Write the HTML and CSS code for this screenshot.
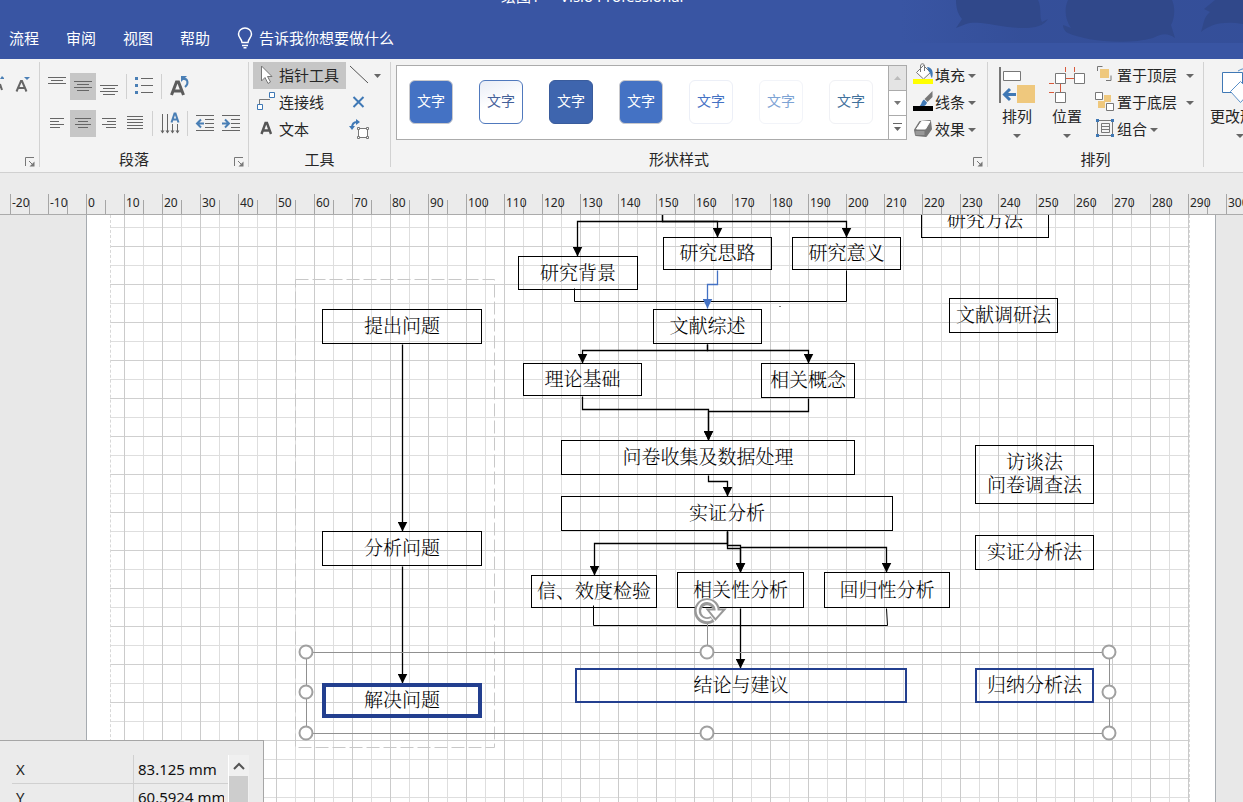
FILE: index.html
```html
<!DOCTYPE html>
<html lang="zh-CN">
<head>
<meta charset="utf-8">
<title>绘图1 - Visio Professional</title>
<link rel="stylesheet" href="styles.css">
</head>
<body>
<header class="header">
  <svg class="header-art" viewBox="0 0 343 43" aria-hidden="true">
    <defs>
      <linearGradient id="fade" x1="0" x2="1" y1="0" y2="0">
        <stop offset="0" stop-color="#334d96" stop-opacity="0"/>
        <stop offset="0.35" stop-color="#334d96" stop-opacity=".75"/>
        <stop offset="1" stop-color="#334d96" stop-opacity=".75"/>
      </linearGradient>
    </defs>
    <rect width="343" height="43" fill="url(#fade)"/>
    <g fill="#30488a">
      <path d="M56 0h82c4 8 1 17 4 22l6-3c-6 10-22 10-40 8-20-3-34-6-42-3l-10 4 6-9c-5-6-6-13-6-19z"/>
      <path d="M168 0h104c4 9 2 20-1 25l4 13c-8-6-14-4-22 0-30 8-70 2-85-5-4-2-5-6-5-8l8 3c-6-9-7-19-3-28z"/>
      <path d="M315 0h28v24c-20-3-32 0-42 8 3-8 2-14 9-20l-6-3z"/>
    </g>
  </svg>
  <div class="titlebar"><span>绘图1&nbsp; -&nbsp; Visio Professional</span></div>
  <nav class="tabs">
    <button class="tab">流程</button>
    <button class="tab">审阅</button>
    <button class="tab">视图</button>
    <button class="tab">帮助</button>
    <button class="tab tell-me">
      <svg width="16" height="22" viewBox="0 0 16 22" fill="none" stroke="#fff" stroke-width="1.5"><path d="M5 15.500C5 12 1.500 11 1.500 7a6.500 6 0 0 1 13 0C14.500 11 11 12 11 15.500zM5 18.500h6M6.500 20.800h3"/></svg>
      告诉我你想要做什么
    </button>
  </nav>
</header>

<section class="ribbon">
  <div class="group group-font">
    <div class="group-body">
      <button class="icon-btn edge" aria-label="增大字号"><svg width="4" height="27" viewBox="0 0 4 27"><path d="M0 6l2-3 3 3z" fill="#4a7fb5"/><path d="M0 11l2 6" stroke="#666" stroke-width="2"/></svg></button>
      <button class="icon-btn" aria-label="减小字号"><svg width="26" height="27" viewBox="0 0 26 27"><path d="M19 4h6l-3 3z" fill="#4a7fb5"/><path d="M11.500 18.500L16 8h1l4.500 10.500M13.200 15h6.600" fill="none" stroke="#666" stroke-width="2"/></svg></button>
    </div>
    <div class="group-foot"><span></span>
      <button class="launcher" aria-label="字体设置"><svg width="10" height="10" viewBox="0 0 10 10"><path d="M.5 9V.5H9M4 4l4 4" fill="none" stroke="#777"/><path d="M9.500 4.500v5h-5z" fill="#777"/></svg></button></div>
  </div>

  <div class="group group-para">
    <div class="group-body">
      <div class="icon-row">
        <button class="icon-btn" aria-label="顶端对齐"><svg width="26" height="27"><path d="M4 4.500h18M7 7.500h12M4 10.500h18" stroke="#666"/></svg></button>
        <button class="icon-btn on" aria-label="中部对齐"><svg width="26" height="27"><path d="M4 8.500h18M7 11.500h12M4 14.500h18M7 17.500h12" stroke="#666"/></svg></button>
        <button class="icon-btn" aria-label="底端对齐"><svg width="26" height="27"><path d="M4 12.500h18M7 15.500h12M4 18.500h18M7 21.500h12" stroke="#666"/></svg></button>
        <i class="bar"></i>
        <button class="icon-btn" aria-label="项目符号"><svg width="26" height="27"><path d="M4 4h3v3H4zM4 11h3v3H4zM4 18h3v3H4z" fill="#4a7fb5"/><path d="M10 5.500h12M10 12.500h12M10 19.500h12" stroke="#666"/></svg></button>
        <i class="bar"></i>
        <button class="icon-btn" aria-label="旋转文字"><svg width="26" height="27"><path d="M5.500 22l5-13h2l5 13M7.500 18h8" fill="none" stroke="#5c5c5c" stroke-width="3"/><path d="M17 6c5-1 6 5 2 8" fill="none" stroke="#4a7fb5" stroke-width="2"/><path d="M15 3h6l-6 6z" fill="#4a7fb5"/></svg></button>
      </div>
      <div class="icon-row">
        <button class="icon-btn" aria-label="左对齐"><svg width="26" height="27"><path d="M6 8.500h14M6 11.500h9M6 14.500h14M6 17.500h10" stroke="#666"/></svg></button>
        <button class="icon-btn on" aria-label="居中"><svg width="26" height="27"><path d="M5 8.500h16M8 11.500h10M5 14.500h16M8 17.500h10" stroke="#666"/></svg></button>
        <button class="icon-btn" aria-label="右对齐"><svg width="26" height="27"><path d="M6 8.500h14M11 11.500h9M6 14.500h14M10 17.500h10" stroke="#666"/></svg></button>
        <button class="icon-btn" aria-label="两端对齐"><svg width="26" height="27"><path d="M5 6.500h16M5 9.500h16M5 12.500h16M5 15.500h16M5 18.500h16" stroke="#666"/></svg></button>
        <i class="bar"></i>
        <button class="icon-btn" aria-label="文字方向"><svg width="26" height="27"><path d="M5.500 4v19M10.500 4v19M15.500 14v9M20.500 14v9" stroke="#666"/><path d="M3.500 20.500h4l-2 3zM8.500 20.500h4l-2 3zM13.500 20.500h4l-2 3zM18.500 20.500h4l-2 3z" fill="#666"/><path d="M14.500 12.500l3-9h1l3 9M15.500 9.500h5" fill="none" stroke="#4a7fb5" stroke-width="2"/></svg></button>
        <i class="bar"></i>
        <button class="icon-btn" aria-label="减少缩进"><svg width="26" height="27"><path d="M4 5.500h18M13 9.500h9M13 13.500h9M13 17.500h9M4 20.500h18" stroke="#666"/><path d="M12 13.500H6M9 9.500l-4 4 4 4" fill="none" stroke="#4a7fb5" stroke-width="2"/></svg></button>
        <button class="icon-btn" aria-label="增加缩进"><svg width="26" height="27"><path d="M4 5.500h18M13 9.500h9M13 13.500h9M13 17.500h9M4 20.500h18" stroke="#666"/><path d="M4 13.500h6M7 9.500l4 4-4 4" fill="none" stroke="#4a7fb5" stroke-width="2"/></svg></button>
      </div>
    </div>
    <div class="group-foot"><span>段落</span>
      <button class="launcher" aria-label="段落设置"><svg width="10" height="10" viewBox="0 0 10 10"><path d="M.5 9V.5H9M4 4l4 4" fill="none" stroke="#777"/><path d="M9.500 4.500v5h-5z" fill="#777"/></svg></button></div>
  </div>

  <div class="group group-tools">
    <div class="group-body tools">
      <button class="tool on"><svg width="22" height="22"><path d="M4.500 2v15l3.500-3.500 3 6 2.500-1.500-3-5.500h4.500z" fill="#fff" stroke="#777"/></svg>指针工具</button>
      <button class="tool-icon" aria-label="线条"><svg width="34" height="27"><path d="M2 4l18 17" stroke="#555"/><path d="M26 12h7l-3.500 4z" fill="#666"/></svg></button>
      <button class="tool"><svg width="22" height="22"><path d="M2.500 13V8.500H13" fill="none" stroke="#777"/><path d="M12.500 1.500h5v5h-5zM.5 13.500h5v5h-5z" fill="#fff" stroke="#3f78b5"/></svg>连接线</button>
      <button class="tool-icon" aria-label="连接点"><svg width="34" height="27"><path d="M5.500 8l10 10M15.500 8l-10 10" stroke="#3f78b5" stroke-width="2"/></svg></button>
      <button class="tool"><svg width="22" height="22"><path d="M4.500 16l4-11H10l4 11M6 12.500h6.500" fill="none" stroke="#555" stroke-width="2.400"/></svg>文本</button>
      <button class="tool-icon" aria-label="文本块"><svg width="34" height="27"><path d="M4 12c0-4 2-6 5-6" fill="none" stroke="#3f78b5" stroke-width="2"/><path d="M1 10h6l-3 4zM8 3l4 3-4 3z" fill="#3f78b5"/><path d="M10.500 12.500h9v9h-9z" fill="#fff" stroke="#777"/><path d="M9.500 11.500h2v2h-2zM18.500 11.500h2v2h-2zM9.500 20.500h2v2h-2zM18.500 20.500h2v2h-2z" fill="#fff" stroke="#777"/></svg></button>
    </div>
    <div class="group-foot"><span>工具</span></div>
  </div>

  <div class="group group-styles">
    <div class="group-body styles">
      <div class="gallery">
        <button class="swatch s1">文字</button>
        <button class="swatch s2">文字</button>
        <button class="swatch s3">文字</button>
        <button class="swatch s1">文字</button>
        <button class="swatch s5">文字</button>
        <button class="swatch s6">文字</button>
        <button class="swatch s7">文字</button>
      </div>
      <div class="gallery-nav">
        <button class="off" aria-label="上一行"><svg width="7" height="4"><path d="M0 4h7L3.500 0z" fill="#bbb"/></svg></button>
        <button aria-label="下一行"><svg width="7" height="4"><path d="M0 0h7L3.500 4z" fill="#777"/></svg></button>
        <button aria-label="其他"><svg width="9" height="9"><path d="M0 0h9v1H0zM1 4h7L4.500 8z" fill="#666"/></svg></button>
      </div>
      <div class="effects">
        <button class="menu-btn"><svg width="22" height="23"><path d="M3.500 9.500l7-7 7 7-7 6.500z" fill="#fff" stroke="#777"/><path d="M7.500 9V3c0-3 4-3 4 0v5" fill="none" stroke="#777"/><path d="M14 4c5 0 7 5 5 11-2-2-1-5-3-6z" fill="#3f78b5"/><path d="M0 16h20v5H0z" fill="#ff0"/></svg>填充<i class="caret"></i></button>
        <button class="menu-btn"><svg width="22" height="23"><path d="M19.500 1v6l-5 5-3-3z" fill="#777"/><path d="M11 9.500l3 3c-1 4-4 4-8 4 3-2 2-5 5-7z" fill="#3f78b5"/><path d="M0 16h20v5H0z" fill="#000"/></svg>线条<i class="caret"></i></button>
        <button class="menu-btn"><svg width="22" height="23"><path d="M2 13l5-8 10-1 1 8-5 7-10-1z" fill="#777" stroke="#777" stroke-width="2" stroke-linejoin="round"/><path d="M3.500 12l5-7.500H17L12.500 12z" fill="#fff" stroke="#fff" stroke-linejoin="round"/><path d="M2.500 14h9v4h-9z" fill="#999"/></svg>效果<i class="caret"></i></button>
      </div>
    </div>
    <div class="group-foot"><span>形状样式</span>
      <button class="launcher" aria-label="形状样式设置"><svg width="10" height="10" viewBox="0 0 10 10"><path d="M.5 9V.5H9M4 4l4 4" fill="none" stroke="#777"/><path d="M9.500 4.500v5h-5z" fill="#777"/></svg></button></div>
  </div>

  <div class="group group-arrange">
    <div class="group-body arrange">
      <button class="big-btn"><svg width="40" height="38"><path d="M2 1h2v36H2z" fill="#777"/><path d="M6.500 5.500h17v9h-17z" fill="#fff" stroke="#777"/><path d="M20 19h18v18H20z" fill="#efc87d"/><path d="M19 28.500H8M13 23l-5.500 5.500L13 34" fill="none" stroke="#3f78b5" stroke-width="3"/></svg>排列<i class="caret"></i></button>
      <button class="big-btn"><svg width="40" height="38"><path d="M18.500 1v5M27.500 1v5M18 12.500h10M2 17.500h5M2 26.500h5M13.500 17v9" stroke="#d9593a"/><path d="M8.500 7.500h10v10h-10zM27.500 7.500h10v10h-10zM8.500 26.500h10v10h-10z" fill="#fff" stroke="#777"/></svg>位置<i class="caret"></i></button>
      <div class="stack">
        <button class="menu-btn"><svg width="22" height="23"><path d="M5 6h9v9H5z" fill="#efc87d"/><path d="M2.500 8V3.500h5M11 17.500h5v-5" fill="none" stroke="#777"/></svg>置于顶层<i class="caret far"></i></button>
        <button class="menu-btn"><svg width="22" height="23"><path d="M9 5h7v7H9zM3 11h7v7H3z" fill="#efc87d"/><path d="M.5 2.500h7v7h-7zM11.500 13.500h7v7h-7z" fill="#fff" stroke="#777"/></svg>置于底层<i class="caret far"></i></button>
        <button class="menu-btn"><svg width="22" height="23"><path d="M3 3.500h14M3 18.500h14M2.500 4v14M17.500 4v14" stroke="#777"/><path d="M6.500 6.500h8v6h-8zM6.500 9.500h8v6h-8z" fill="none" stroke="#777"/><path d="M1 2h3v3H1zM16 2h3v3h-3zM1 17h3v3H1zM16 17h3v3h-3z" fill="#3f78b5"/></svg>组合<i class="caret"></i></button>
      </div>
    </div>
    <div class="group-foot"><span>排列</span></div>
  </div>

  <div class="group group-edit">
    <div class="group-body arrange">
      <button class="big-btn wide"><svg width="40" height="38"><path d="M2.500 6.500h20v20h-20z" fill="#fff" stroke="#3f78b5"/><path d="M18 5c8-5 14-2 16 4" fill="none" stroke="#5a90c8"/><path d="M20.500 15.500l10 10-10 11-10-11z" fill="#fff" stroke="#5a90c8"/></svg>更改形状<i class="caret"></i></button>
    </div>
  </div>
</section>

<div class="ruler">
  <span>-20</span><span>-10</span><span>0</span><span>10</span><span>20</span><span>30</span><span>40</span><span>50</span><span>60</span><span>70</span><span>80</span><span>90</span><span>100</span><span>110</span><span>120</span><span>130</span><span>140</span><span>150</span><span>160</span><span>170</span><span>180</span><span>190</span><span>200</span><span>210</span><span>220</span><span>230</span><span>240</span><span>250</span><span>260</span><span>270</span><span>280</span><span>290</span><span>300</span>
</div>

<main class="canvas">
  <div class="page"><div class="grid"></div></div>

  <svg class="wires" width="1243" height="587" aria-hidden="true">
    <defs>
      <marker id="tip" markerUnits="userSpaceOnUse" markerWidth="10" markerHeight="10" refX="10" refY="5" orient="auto"><path d="M0 0l10 5-10 5z"/></marker>
      <marker id="tip-blue" markerUnits="userSpaceOnUse" markerWidth="10" markerHeight="10" refX="10" refY="5" orient="auto"><path d="M0 0l10 5-10 5z" fill="#4472c4"/></marker>
    </defs>
    <g transform="translate(.5 -214.500)" fill="none" stroke="#000" stroke-width="1.300">
      <path d="M295 279h199v468H295z" stroke="#c8c8c8" stroke-width="1" stroke-dasharray="13 4"/>
      <g marker-end="url(#tip)">
        <path d="M662 214V221H577V256"/>
        <path d="M662 214V221H717V237"/>
        <path d="M662 221H846V237"/>
        <path d="M707 344V350H582V363"/>
        <path d="M707 344V350H808V363"/>
        <path d="M582 396V409H708V440"/>
        <path d="M808 398V411H708V440"/>
        <path d="M708 475V481H727V496"/>
        <path d="M727 531V543H594V575"/>
        <path d="M727 531V548H740V572"/>
        <path d="M727 531V545H740V572"/>
        <path d="M740 547H886V572"/>
        <path d="M740 608V668"/>
        <path d="M402 344V531"/>
        <path d="M402 566V683"/>
      </g>
      <path d="M574 288V301H846V270M593 605V625H887L886 608" stroke-width="1"/>
      <path d="M717 270V284H707V308" stroke="#4472c4" marker-end="url(#tip-blue)"/>
      <path d="M779 306h1" stroke-width="1"/>
    </g>
  </svg>

  <div class="node n-tichu">提出问题</div>
  <div class="node n-fenxi">分析问题</div>
  <div class="node n-jiejue">解决问题</div>
  <div class="node n-beijing">研究背景</div>
  <div class="node n-silu">研究思路</div>
  <div class="node n-yiyi">研究意义</div>
  <div class="node n-zongshu">文献综述</div>
  <div class="node n-lilun">理论基础</div>
  <div class="node n-gainian">相关概念</div>
  <div class="node n-wenjuan">问卷收集及数据处理</div>
  <div class="node n-shizheng">实证分析</div>
  <div class="node n-xiaodu">信、效度检验</div>
  <div class="node n-xiangguan">相关性分析</div>
  <div class="node n-huigui">回归性分析</div>
  <div class="node n-jielun">结论与建议</div>
  <div class="node n-fangfa">研究方法</div>
  <div class="node n-diaoyan">文献调研法</div>
  <div class="node n-fangtan">访谈法<br>问卷调查法</div>
  <div class="node n-szfa">实证分析法</div>
  <div class="node n-guina">归纳分析法</div>

  <svg class="wires" width="1243" height="587" aria-hidden="true">
    <g transform="translate(.5 -214.500)" fill="none" stroke="#909090">
      <path d="M306 652H1109V733H306zM707 652V623"/>
      <g fill="#fff" stroke="#a0a0a0" stroke-width="2">
        <circle cx="305.500" cy="651.500" r="6.500"/><circle cx="706.500" cy="651.500" r="6.500"/><circle cx="1108.500" cy="651.500" r="6.500"/>
        <circle cx="305.500" cy="691.500" r="6.500"/><circle cx="1108.500" cy="691.500" r="6.500"/>
        <circle cx="305.500" cy="732.500" r="6.500"/><circle cx="706.500" cy="732.500" r="6.500"/><circle cx="1108.500" cy="732.500" r="6.500"/>
      </g>
      <path d="M712 618.500A9.500 9.500 0 1 1 716 609.500" stroke="#999" stroke-width="7"/>
      <path d="M707 609h17l-9 10z" fill="#fff" stroke="#999" stroke-width="2"/>
      <path d="M711 618.500A9.500 9.500 0 1 1 716 611.500" stroke="#fff" stroke-width="2"/>
    </g>
  </svg>

  <aside class="panel">
    <table class="props">
      <tr><th><label for="px">X</label></th><td><input id="px" value="83.125 mm"></td></tr>
      <tr><th><label for="py">Y</label></th><td><input id="py" value="60.5924 mm"></td></tr>
    </table>
    <div class="scroll">
      <button aria-label="向上滚动"><svg width="12" height="8"><path d="M1 7l5-5 5 5" fill="none" stroke="#555" stroke-width="2"/></svg></button>
      <div class="thumb"></div>
    </div>
  </aside>
</main>
</body>
</html>
```
FILE: styles.css
```css
* { box-sizing: border-box; }

body {
  margin: 0;
  height: 100vh;
  display: flex;
  flex-direction: column;
  overflow: hidden;
  font: 15px/20px "Noto Sans", "Noto Sans CJK SC", sans-serif;
  color: #262626;
  background: #e8e8e8;
}

button {
  border: 0;
  padding: 0;
  background: none;
  font: inherit;
  color: inherit;
  white-space: nowrap;
}

svg { display: block; flex: none; }

/* Header */
.header {
  position: relative;
  flex: none;
  height: 59px;
  background: #3955a3;
  color: #fff;
  overflow: hidden;
}
.header-art { position: absolute; top: 0; right: 0; width: 343px; height: 43px; }
.titlebar {
  display: flex;
  align-items: flex-end;
  height: 18px;
  padding: 0 0 12px 501px;
  white-space: nowrap;
}
.tabs { position: relative; display: flex; height: 39px; padding: 0 9px; gap: 27px; }
.tell-me { display: flex; align-items: center; gap: 6px; }

/* Ribbon */
.ribbon {
  flex: none;
  display: flex;
  height: 114px;
  padding: 3px 0 5px;
  background: #f3f3f3;
  border-bottom: 1px solid #d0d0d0;
  overflow: hidden;
}
.group {
  flex: none;
  display: flex;
  flex-direction: column;
  justify-content: space-between;
  border-right: 1px solid #d2d2d2;
}
.group-font { width: 40px; }
.group-para { width: 209px; }
.group-tools { width: 142px; }
.group-styles { width: 597px; }
.group-arrange { width: 216px; }
.group-edit { width: 80px; border-right: 0; }
.group-foot { display: flex; align-items: flex-end; height: 16px; }
.group-foot span { flex: 1; text-align: center; line-height: 16px; }
.launcher { flex: none; width: 10px; margin: 0 4px 0 6px; }

.group-font .group-body { display: flex; padding-top: 11px; }
.icon-btn { flex: none; width: 26px; height: 27px; }
.icon-btn.edge { width: 5px; }
.on { background: #c6c6c6; }
.group-para .group-body { display: flex; flex-direction: column; gap: 10px; padding: 11px 0 0 4px; }
.icon-row { display: flex; align-items: center; }
.bar { width: 1px; height: 25px; margin: 0 4px; background: #d0d0d0; }

.tools { display: grid; grid-template-columns: 93px 36px; column-gap: 2px; padding-left: 4px; }
.tool { display: flex; align-items: center; height: 27px; padding: 0 0 2px 4px; }
.tool-icon { height: 27px; }

.styles { display: flex; padding: 3px 0 0 5px; }
.gallery {
  display: flex;
  align-items: center;
  gap: 26px;
  width: 493px;
  height: 75px;
  padding: 0 12px 2px;
  background: #fff;
  border: 1px solid #ababab;
}
.swatch {
  flex: none;
  width: 44px;
  height: 44px;
  padding-bottom: 2px;
  border-radius: 6px;
  font-size: 14px;
  border: 1px solid #c9c9cc;
}
.s1 { background: #4472c4; color: #fff; }
.s2 { background: linear-gradient(160deg, #e9edf6, #fff 50%); border-color: #5079bd; color: #44619a; }
.s3 { background: #3e65ae; border-color: #3a5c9c; color: #fff; }
.s5 { border-color: #eceff7; color: #4472c4; }
.s6 { border-color: #f2f4f9; color: #7da3d4; }
.s7 { border-color: #f0f1f5; color: #41719c; }
.gallery-nav { display: grid; grid-template-rows: 26px 25px 24px; width: 18px; }
.gallery-nav button {
  display: flex;
  align-items: center;
  justify-content: center;
  background: #fff;
  border: solid #ababab;
  border-width: 0 1px 1px 0;
}
.gallery-nav .off { background: #e4e4e4; border-top-width: 1px; }
.effects { margin: -3px 0 0 6px; }
.menu-btn { display: flex; align-items: center; height: 27px; padding-bottom: 2px; }
.caret {
  border: solid transparent;
  border-width: 4px 4px 0;
  border-top-color: #666;
  margin: 2px 0 0 3px;
}
.caret.far { margin-left: 9px; }

.arrange { display: flex; padding-left: 8px; }
.big-btn {
  display: flex;
  flex-direction: column;
  align-items: center;
  width: 42px;
  padding-top: 4px;
  line-height: 24px;
}
.big-btn .caret { margin: 6px 0 0; }
.big-btn + .big-btn { margin-left: 8px; }
.big-btn.wide { width: 64px; }
.group-edit .arrange { padding-left: 4px; }
.stack { margin-left: 7px; }

/* Ruler */
.ruler {
  flex: none;
  display: flex;
  align-items: flex-end;
  height: 42px;
  padding-left: 10px;
  background: #ebebeb;
  border-bottom: 1px solid #ababab;
  overflow: hidden;
  font-size: 12px;
}
.ruler span {
  flex: none;
  width: 38px;
  height: 20px;
  padding-left: 1px;
  line-height: 17px;
  border-left: 1px solid #a6a6a6;
  background: linear-gradient(#a6a6a6, #a6a6a6) 18px 100% / 1px 14px no-repeat;
}

/* Drawing surface */
.canvas { position: relative; flex: 1; overflow: hidden; }
.page {
  height: 100%;
  margin: 0 27px 0 86px;
  padding: 0 25px 0 23px;
  background: #fff;
  border: solid #a6abb0;
  border-width: 0 1px;
}
.grid {
  height: 100%;
  border: dashed #d8d8d8;
  border-width: 0 1px;
  background:
    linear-gradient(90deg, #cbcbcb 1px, transparent 1px) 13px 0 / 38px 38px,
    linear-gradient(#cfcfcf 1px, transparent 1px) 0 31px / 38px 38px,
    linear-gradient(90deg, #dedede 1px, transparent 1px) 32px 0 / 38px 38px,
    linear-gradient(#dedede 1px, transparent 1px) 0 12px / 38px 38px;
}
.wires { position: absolute; top: 0; left: 0; }
.node {
  position: absolute;
  display: flex;
  align-items: center;
  justify-content: center;
  width: 119px;
  height: 35px;
  padding-bottom: 4px;
  border: 1px solid #000;
  color: #000;
  font: 300 19px/23px "Noto Serif CJK SC", "Noto Sans CJK SC", serif;
  text-align: center;
  white-space: nowrap;
}
.n-tichu { left: 322px; top: 94px; width: 160px; }
.n-fenxi { left: 322px; top: 316px; width: 160px; }
.n-jiejue { left: 322px; top: 468px; width: 160px; border: 4px solid #233f8f; }
.n-beijing { left: 518px; top: 41px; width: 120px; height: 34px; }
.n-silu { left: 663px; top: 22px; width: 109px; height: 33px; }
.n-yiyi { left: 792px; top: 22px; width: 109px; height: 33px; }
.n-zongshu { left: 653px; top: 94px; width: 109px; }
.n-lilun { left: 523px; top: 148px; height: 33px; }
.n-gainian { left: 761px; top: 148px; width: 94px; }
.n-wenjuan { left: 561px; top: 225px; width: 294px; }
.n-shizheng { left: 561px; top: 281px; width: 332px; }
.n-xiaodu { left: 531px; top: 360px; width: 126px; height: 33px; }
.n-xiangguan { left: 677px; top: 357px; width: 127px; height: 36px; }
.n-huigui { left: 824px; top: 357px; width: 126px; height: 36px; }
.n-jielun { left: 575px; top: 453px; width: 332px; border: 2px solid #233f8f; }
.n-fangfa { left: 921px; top: -12px; width: 128px; }
.n-diaoyan { left: 949px; top: 83px; width: 109px; }
.n-fangtan { left: 975px; top: 230px; height: 59px; padding-bottom: 6px; }
.n-szfa { left: 975px; top: 320px; }
.n-guina { left: 975px; top: 453px; border: 2px solid #233f8f; }

/* Size and position panel */
.panel {
  position: absolute;
  left: 0;
  bottom: 0;
  display: flex;
  width: 264px;
  height: 62px;
  padding: 14px 0 0 12px;
  background: #ebebeb;
  border: solid #a6a6a6;
  border-width: 1px 1px 0 0;
  overflow: hidden;
}
.props { width: 216px; border-collapse: collapse; }
.props th {
  width: 122px;
  height: 28px;
  padding: 0 0 0 4px;
  font-weight: 400;
  text-align: left;
  border-right: 1px solid #d0d0d0;
  border-bottom: 1px solid #d0d0d0;
}
.props td { padding: 0 4px; border-bottom: 1px solid #d0d0d0; }
.props input {
  display: block;
  width: 86px;
  height: 26px;
  padding: 0;
  border: 0;
  background: none;
  font: inherit;
  color: #111;
}
.scroll { width: 21px; border-left: 1px solid #fff; background: #f0f0f0; }
.scroll button { display: flex; align-items: center; justify-content: center; width: 20px; height: 21px; }
.thumb { width: 19px; height: 60px; background: #cdcdcd; }
```
